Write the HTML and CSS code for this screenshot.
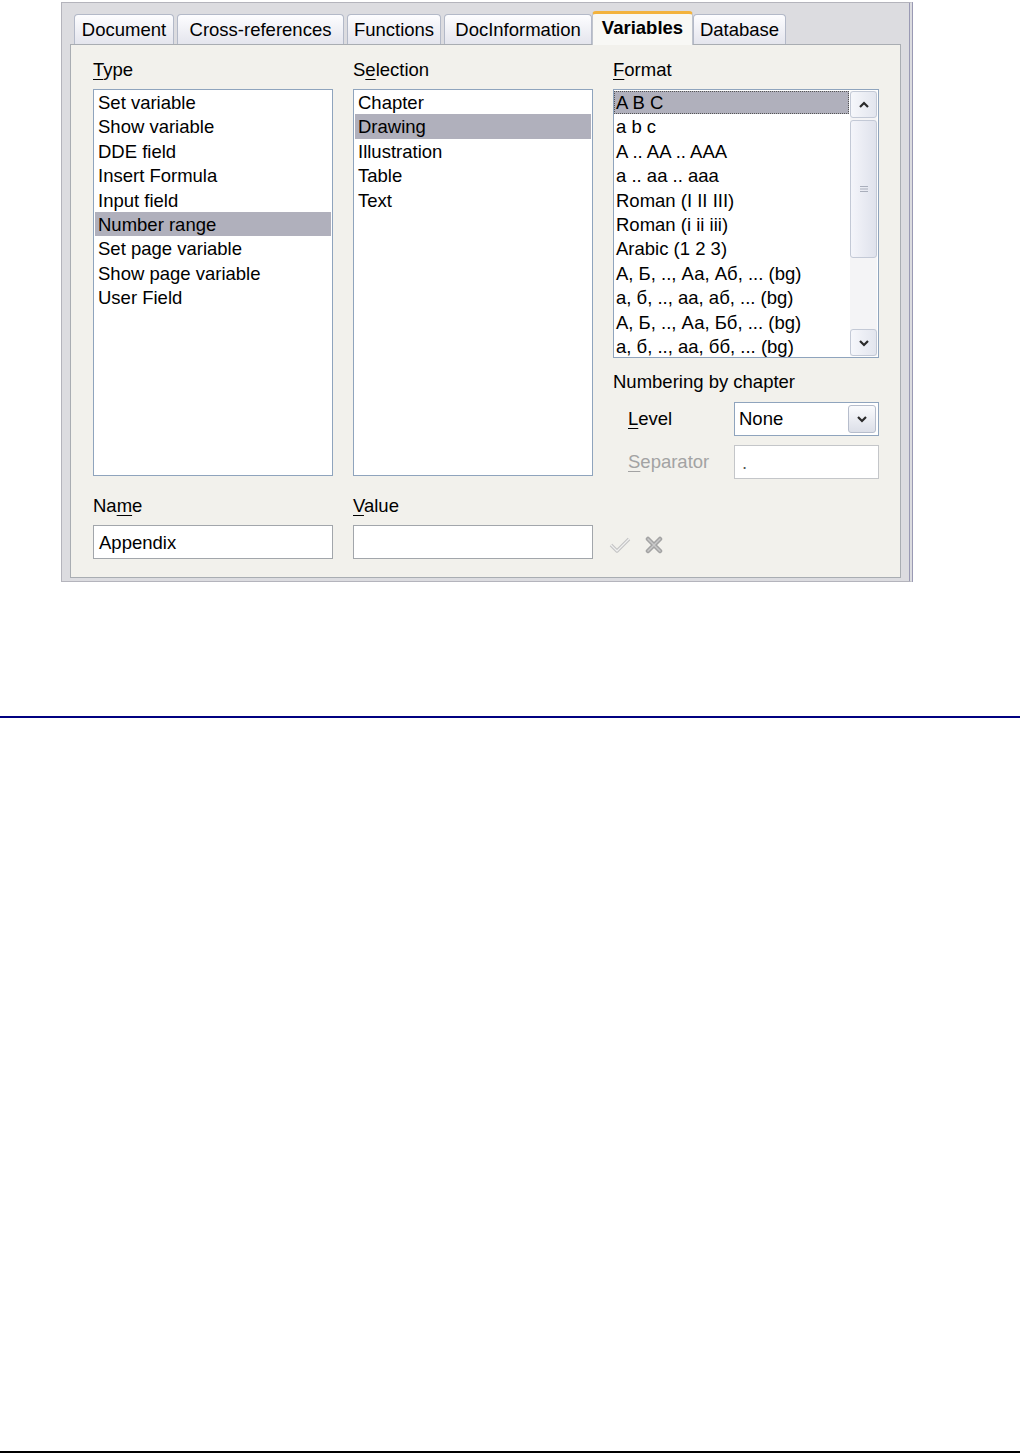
FILE: index.html
```html
<!DOCTYPE html>
<html lang="en">
<head>
  <meta charset="UTF-8">
  <title>Fields - Variables</title>
  <link rel="stylesheet" href="styles.css">
</head>
<body>
  <div class="dialog">
    <div class="tabs">
      <div class="tab t-doc">Document</div>
      <div class="tab t-xref">Cross-references</div>
      <div class="tab t-func">Functions</div>
      <div class="tab t-info">DocInformation</div>
      <div class="tab t-var active">Variables</div>
      <div class="tab t-db">Database</div>
    </div>

    <div class="panel">
      <div class="cols top">
        <div class="col">
          <div class="label"><u>T</u>ype</div>
          <div class="list">
            <div class="item">Set variable</div>
            <div class="item">Show variable</div>
            <div class="item">DDE field</div>
            <div class="item">Insert Formula</div>
            <div class="item">Input field</div>
            <div class="item sel">Number range</div>
            <div class="item">Set page variable</div>
            <div class="item">Show page variable</div>
            <div class="item">User Field</div>
          </div>
        </div>

        <div class="col">
          <div class="label">S<u>e</u>lection</div>
          <div class="list">
            <div class="item">Chapter</div>
            <div class="item sel">Drawing</div>
            <div class="item">Illustration</div>
            <div class="item">Table</div>
            <div class="item">Text</div>
          </div>
        </div>

        <div class="col">
          <div class="label"><u>F</u>ormat</div>
          <div class="list format-list">
            <div class="items">
              <div class="item sel focus">A B C</div>
              <div class="item">a b c</div>
              <div class="item">A .. AA .. AAA</div>
              <div class="item">a .. aa .. aaa</div>
              <div class="item">Roman (I II III)</div>
              <div class="item">Roman (i ii iii)</div>
              <div class="item">Arabic (1 2 3)</div>
              <div class="item">А, Б, .., Аа, Аб, ... (bg)</div>
              <div class="item">а, б, .., аа, аб, ... (bg)</div>
              <div class="item">А, Б, .., Аа, Бб, ... (bg)</div>
              <div class="item">а, б, .., аа, бб, ... (bg)</div>
            </div>
            <div class="scrollbar">
              <div class="sb-btn">
                <svg width="12" height="8" viewBox="0 0 12 8"><polyline points="2,6 6,2 10,6" fill="none" stroke="#2a2a2a" stroke-width="2.2"/></svg>
              </div>
              <div class="sb-thumb">
                <svg width="8" height="8" viewBox="0 0 8 8"><path d="M0 1.5h8M0 4h8M0 6.5h8" stroke="#a9aebb" stroke-width="1"/></svg>
              </div>
              <div class="sb-track"></div>
              <div class="sb-btn">
                <svg width="12" height="8" viewBox="0 0 12 8"><polyline points="2,2 6,6 10,2" fill="none" stroke="#2a2a2a" stroke-width="2.2"/></svg>
              </div>
            </div>
          </div>

          <div class="label chapter">Numbering by chapter</div>
          <div class="field-row">
            <span class="field-label"><u>L</u>evel</span>
            <div class="combo">
              <span>None</span>
              <span class="drop">
                <svg width="12" height="8" viewBox="0 0 12 8"><polyline points="2,2 6,6 10,2" fill="none" stroke="#2a2a2a" stroke-width="2.2"/></svg>
              </span>
            </div>
          </div>
          <div class="field-row">
            <span class="field-label off"><u>S</u>eparator</span>
            <div class="input sep">.</div>
          </div>
        </div>
      </div>

      <div class="cols bottom">
        <div class="col">
          <div class="label">Na<u>m</u>e</div>
          <div class="input">Appendix</div>
        </div>
        <div class="col">
          <div class="label"><u>V</u>alue</div>
          <div class="input"></div>
        </div>
        <div class="col icons">
          <svg width="22" height="18" viewBox="0 0 22 18">
            <polyline points="2,9 8,15 20,3" fill="none" stroke="#c4c4c4" stroke-width="3.5" stroke-linejoin="round"/>
            <polyline points="2,9 8,15 20,3" fill="none" stroke="#f0f0f0" stroke-width="1.2" stroke-linejoin="round"/>
          </svg>
          <svg width="18" height="18" viewBox="0 0 18 18">
            <path d="M3 3L15 15M15 3L3 15" stroke="#a3a3a3" stroke-width="4.5" stroke-linecap="round"/>
            <path d="M3 3L15 15M15 3L3 15" stroke="#c9c9c9" stroke-width="1.5" stroke-linecap="round"/>
          </svg>
        </div>
      </div>
    </div>
  </div>

  <div class="rule blue"></div>
  <div class="rule black"></div>
</body>
</html>
```

FILE: styles.css
```css
body {
  margin: 0;
  background: #fff;
  color: #000;
  font-family: "Liberation Sans", Arial, sans-serif;
  font-size: 18.5px;
}

u {
  text-decoration-thickness: 1px;
  text-underline-offset: 3px;
}

.dialog {
  width: 852px;
  height: 580px;
  margin: 2px 0 0 61px;
  box-sizing: border-box;
  padding: 8px 0 0 8px;
  background: #dcdce0;
  border-top: 1px solid #b4b4bc;
  border-left: 1px solid #b4b4bc;
  border-bottom: 1px solid #b4b4bc;
  border-right: 4px double #9a9ab4;
}

/* tab strip */
.tabs {
  display: flex;
  align-items: flex-end;
  height: 33px;
  margin-left: 4px;
  position: relative;
  z-index: 1;
}
.tab {
  height: 30px;
  box-sizing: border-box;
  margin-right: 3px;
  display: flex;
  align-items: center;
  justify-content: center;
  border: 1px solid #b3b9c8;
  border-bottom: none;
  border-radius: 4px 4px 0 0;
  background: linear-gradient(#fdfdff, #e4e5ed);
  white-space: nowrap;
}
.t-doc { width: 100px; }
.t-xref { width: 167px; }
.t-func { width: 94px; }
.t-info { width: 148px; margin-right: 0; }
.t-var { width: 101px; }
.t-db { width: 93px; }

.tab.active {
  height: 34px;
  margin-bottom: -1px;
  margin-right: 0;
  padding-bottom: 3px;
  font-weight: bold;
  background: #f8f8f5;
  border-top: 3px solid #f3b33d;
  border-color: #f3b33d #c0c4cc #c0c4cc;
}

.panel {
  width: 831px;
  height: 534px;
  box-sizing: border-box;
  padding: 14px 0 0 22px;
  background: #f2f1ec;
  border: 1px solid #a9adb2;
}

.cols {
  display: grid;
  grid-template-columns: 240px 240px 266px;
  column-gap: 20px;
}
.cols.top {
  height: 417px;
}
.col {
  display: flex;
  flex-direction: column;
}

.label {
  height: 22px;
  line-height: 22px;
  margin-bottom: 8px;
  white-space: nowrap;
}

/* list boxes */
.list {
  height: 387px;
  box-sizing: border-box;
  padding: 0 1px;
  background: #fff;
  border: 1px solid #8fa4bd;
  overflow: hidden;
}
.item {
  height: 24.4px;
  box-sizing: border-box;
  padding: 2px 0 0 3px;
  line-height: 22.4px;
  white-space: nowrap;
}
.item.sel {
  background: #b0b0bc;
}

.format-list {
  height: 269px;
  display: flex;
  padding: 0;
}
.format-list .items {
  flex: 1;
  overflow: hidden;
}
.format-list .item {
  padding-left: 2px;
}
.item.focus {
  outline: 1px dotted #555;
  outline-offset: -1px;
  margin-top: 1px;
  height: 23.4px;
  padding-top: 1px;
}

.scrollbar {
  width: 27px;
  margin: 1px;
  display: flex;
  flex-direction: column;
  background: #f4f4f6;
}
.sb-btn {
  height: 27px;
  box-sizing: border-box;
  display: flex;
  align-items: center;
  justify-content: center;
  border: 1px solid #c3c9d6;
  border-radius: 3px;
  background: linear-gradient(90deg, #f6f7fb, #e2e5ee);
}
.sb-thumb {
  height: 138px;
  margin-top: 2px;
  box-sizing: border-box;
  display: flex;
  align-items: center;
  justify-content: center;
  border: 1px solid #c3c9d6;
  border-radius: 3px;
  background: linear-gradient(90deg, #f4f5fa, #dfe2ec);
}
.sb-track {
  flex: 1;
}

.chapter {
  margin-top: 13px;
  margin-bottom: 9px;
}
.field-row {
  display: flex;
  align-items: center;
  height: 34px;
  margin-bottom: 9px;
}
.field-row:last-child {
  margin-bottom: 0;
}
.field-label {
  width: 121px;
  box-sizing: border-box;
  padding-left: 15px;
}
.field-label.off {
  color: #a3a3a3;
}

.combo {
  width: 145px;
  height: 34px;
  box-sizing: border-box;
  padding: 0 2px 0 4px;
  display: flex;
  align-items: center;
  justify-content: space-between;
  background: #fff;
  border: 1px solid #8fa4bd;
}
.drop {
  width: 28px;
  height: 28px;
  box-sizing: border-box;
  display: flex;
  align-items: center;
  justify-content: center;
  border: 1px solid #b6bdcc;
  border-radius: 3px;
  background: linear-gradient(#fafbfd, #dcdfe8);
}

.input {
  height: 34px;
  box-sizing: border-box;
  padding-left: 5px;
  line-height: 33px;
  background: #fff;
  border: 1px solid #a2a6ab;
}
.input.sep {
  width: 145px;
  padding-left: 7px;
  color: #555;
  border-color: #c4c6c9;
}

.bottom {
  margin-top: 19px;
}
.icons {
  flex-direction: row;
  align-items: center;
  align-self: end;
  height: 34px;
  gap: 14px;
  margin-left: -4px;
  padding-top: 6px;
  box-sizing: border-box;
}

/* page rules */
.rule {
  height: 2px;
}
.rule.blue {
  margin-top: 134px;
  background: #000080;
}
.rule.black {
  margin-top: 733px;
  background: #000;
}
```
